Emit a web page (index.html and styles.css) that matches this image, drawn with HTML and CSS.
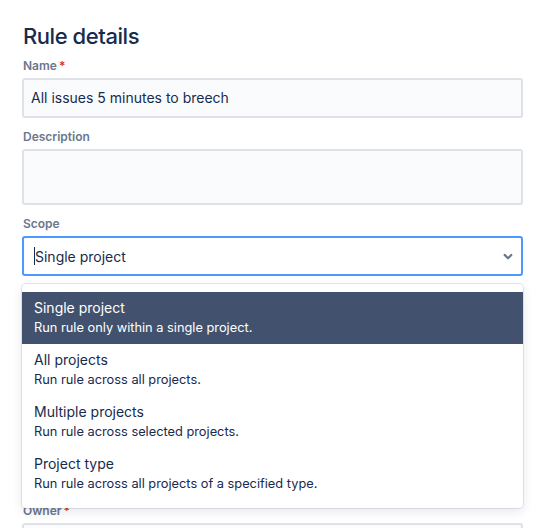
FILE: index.html
```html
<!DOCTYPE html>
<html lang="en">
<head>
<meta charset="utf-8">
<title>Rule details</title>
<link rel="stylesheet" href="styles.css">
</head>
<body>
<div class="form">
  <h1 class="title">Rule details</h1>

  <div class="field">
    <label class="label">Name<span class="req">*</span></label>
    <div class="input">All issues 5 minutes to breech</div>
  </div>

  <div class="field">
    <label class="label">Description</label>
    <div class="input textarea"></div>
  </div>

  <div class="field scope">
    <label class="label">Scope</label>
    <div class="select">
      <span class="caret"></span><span class="value">Single project</span>
      <svg class="chevron" width="24" height="24" viewBox="0 0 24 24"><path fill="currentColor" d="M8.292 10.293a1.009 1.009 0 0 0 0 1.419l2.939 2.965c.218.215.5.322.779.322s.556-.107.769-.322l2.930-2.955a1.01 1.01 0 0 0 0-1.419.987.987 0 0 0-1.406 0l-2.298 2.317-2.307-2.327a.99.99 0 0 0-1.406 0z"/></svg>
    </div>
    <ul class="menu">
      <li class="option selected">
        <div class="opt-title">Single project</div>
        <div class="opt-desc">Run rule only within a single project.</div>
      </li>
      <li class="option">
        <div class="opt-title">All projects</div>
        <div class="opt-desc">Run rule across all projects.</div>
      </li>
      <li class="option">
        <div class="opt-title">Multiple projects</div>
        <div class="opt-desc">Run rule across selected projects.</div>
      </li>
      <li class="option">
        <div class="opt-title">Project type</div>
        <div class="opt-desc">Run rule across all projects of a specified type.</div>
      </li>
    </ul>
  </div>

  <div class="field owner">
    <label class="label">Owner<span class="req">*</span></label>
    <div class="input"></div>
  </div>
</div>
</body>
</html>
```

FILE: styles.css
```css
* { box-sizing: border-box; }
html, body { margin: 0; padding: 0; background: #fff; }
body {
  font-family: Inter, "Liberation Sans", sans-serif;
  color: #172B4D;
  overflow: hidden;
  height: 528px;
}
.form {
  width: 501px;
  margin-left: 22px;
  padding-top: 22px;
}
.title {
  margin: 0 0 0 1px;
  font-size: 22px;
  line-height: 28px;
  font-weight: 500;
  color: #172B4D;
  letter-spacing: -0.02em;
}
.field { margin-top: 11px; }
.title + .field { margin-top: 8px; }
.label {
  display: block;
  font-size: 12px;
  line-height: 16px;
  font-weight: 600;
  color: #6B778C;
  margin: 0 0 4px 1px;
}
.req { color: #DE350B; margin-left: 2px; }
.input {
  height: 40px;
  background: #FAFBFC;
  border: 2px solid #DFE1E6;
  border-radius: 3px;
  font-size: 14px;
  line-height: 20px;
  padding: 8px 7px;
  color: #172B4D;
}
.textarea { height: 56px; }
.scope { position: relative; }
.select {
  height: 40px;
  background: #fff;
  border: 2px solid #4C9AFF;
  border-radius: 3px;
  display: flex;
  align-items: center;
  padding: 0 0 0 10px;
  font-size: 14px;
  color: #172B4D;
}
.caret {
  width: 1px;
  height: 18px;
  background: #172B4D;
}
.value { flex: 1; }
.chevron { color: #6B778C; margin-right: 1px; transform: scale(1.1); }
.menu {
  position: absolute;
  left: 0;
  right: 0;
  top: 68px;
  margin: 0;
  padding: 8px 0;
  list-style: none;
  background: #fff;
  border-radius: 4px;
  box-shadow: 0 0 0 1px rgba(9, 30, 66, 0.1), 0 4px 11px rgba(9, 30, 66, 0.1);
  z-index: 2;
}
.option {
  height: 52px;
  padding: 6px 12px;
}
.option.selected { background: #42526E; color: #fff; }
.opt-title { font-size: 14px; line-height: 20px; }
.opt-desc { font-size: 12.8px; line-height: 20px; }
.owner { margin-top: 227px; }
```
